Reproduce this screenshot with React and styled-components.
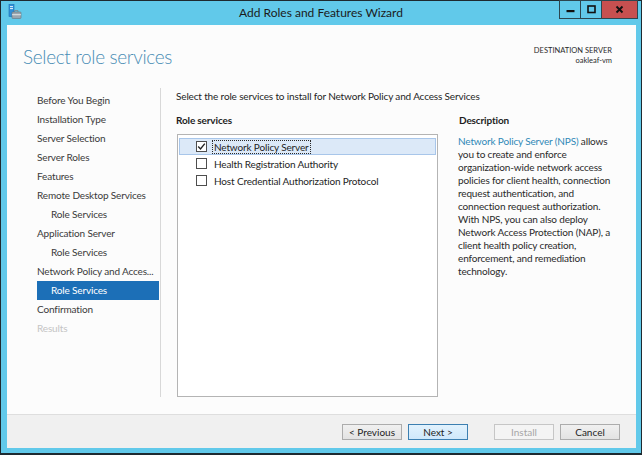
import styled, { createGlobalStyle } from "styled-components";

//////////////////////////////////////////////////////////////////////////////////////
// Constants
///////////////////////////////////////////////////

const frameCol = "#61c9ea";
const titleCol = "#4a8db5";
const linkCol = "#2f88b7";
const navSelCol = "#1c6fb7";
const uiFont = `Lato, "Noto Sans", "Liberation Sans", sans-serif`;

const navItems = [
	{ label: "Before You Begin" },
	{ label: "Installation Type" },
	{ label: "Server Selection" },
	{ label: "Server Roles" },
	{ label: "Features" },
	{ label: "Remote Desktop Services" },
	{ label: "Role Services", sub: true },
	{ label: "Application Server" },
	{ label: "Role Services", sub: true },
	{ label: "Network Policy and Acces..." },
	{ label: "Role Services", sub: true, active: true },
	{ label: "Confirmation" },
	{ label: "Results", disabled: true },
];

const services = [
	{ label: "Network Policy Server", checked: true, selected: true },
	{ label: "Health Registration Authority" },
	{ label: "Host Credential Authorization Protocol" },
];

//////////////////////////////////////////////////////////////////////////////////////
// Styles
///////////////////////////////////////////////////

const GlobalStyle = createGlobalStyle`
	html, body {
		margin: 0;
		padding: 0;
		background: #ffffff;
	}
	* {
		box-sizing: border-box;
	}
`;

const Window = styled.div`
	width: 642px;
	height: 455px;
	display: flex;
	flex-direction: column;
	background: ${frameCol};
	border: 1px solid #1e2a30;
	border-bottom-width: 2px;
	font-family: ${uiFont};
`;

const TitleBar = styled.div`
	height: 24px;
	flex: none;
	display: grid;
	grid-template-columns: 1fr auto 1fr;
	align-items: center;
`;

const AppIcon = styled.svg`
	margin-left: 7px;
	margin-top: -2px;
`;

const TitleText = styled.div`
	font-size: 12px;
	color: #1b1b1b;
	margin-top: -1px;
`;

const Controls = styled.div`
	justify-self: end;
	align-self: start;
	display: flex;
	margin-right: 3px;
	margin-top: -1px;
`;

const CtrlButton = styled.div`
	width: ${(p) => (p.$close ? 37 : 22)}px;
	height: 19px;
	display: flex;
	align-items: center;
	justify-content: center;
	border: 1px solid #2c4650;
	margin-left: -1px;
	background: ${(p) => (p.$close ? "#c75050" : frameCol)};
`;

const Client = styled.div`
	flex: 1;
	margin: 0 5px 5px 6px;
	display: flex;
	flex-direction: column;
	background: #fcfcfc;
	min-height: 0;
`;

const Header = styled.div`
	height: 63px;
	flex: none;
	display: flex;
	justify-content: space-between;
	align-items: flex-start;
	padding: 0 24px 0 16px;
`;

const PageTitle = styled.h1`
	margin: 20px 0 0;
	font-size: 19px;
	line-height: 24px;
	font-weight: 300;
	letter-spacing: -0.35px;
	color: ${titleCol};
`;

const Destination = styled.div`
	margin-top: 21px;
	text-align: right;
	font-size: 7.5px;
	line-height: 10px;
	color: #2a2a2a;
`;

const Body = styled.div`
	flex: 1;
	display: flex;
	padding-bottom: 17px;
	min-height: 0;
	font-size: 10px;
	letter-spacing: -0.15px;
`;

const Nav = styled.div`
	width: 154px;
	flex: none;
	padding: 3px 0 0 30px;
	border-right: 1px solid #d8d8d8;
`;

const NavItem = styled.div`
	height: 19px;
	line-height: 19px;
	margin-right: 1px;
	padding-left: ${(p) => (p.$sub ? 14 : 0)}px;
	white-space: nowrap;
	color: ${(p) => (p.$active ? "#ffffff" : p.$disabled ? "#c4c4c4" : "#3a3a3a")};
	background: ${(p) => (p.$active ? navSelCol : "transparent")};
`;

const Main = styled.div`
	flex: 1;
	display: flex;
	flex-direction: column;
	padding: 1px 16px 0 15px;
	min-width: 0;
`;

const Intro = styled.div`
	line-height: 14px;
	color: #1e1e1e;
	white-space: nowrap;
`;

const Columns = styled.div`
	flex: 1;
	display: grid;
	grid-template-columns: 262px 1fr;
	column-gap: 20px;
	margin-top: 10px;
	min-height: 0;
`;

const Column = styled.div`
	display: flex;
	flex-direction: column;
	min-height: 0;
`;

const ColHeading = styled.div`
	line-height: 14px;
	font-weight: 700;
	color: #1e1e1e;
	padding-left: ${(p) => (p.$inset ? 1 : 0)}px;
`;

const ListBox = styled.div`
	flex: 1;
	margin: 7px 0 0 1px;
	padding: 3px 1px;
	background: #ffffff;
	border: 1px solid #b4b4b4;
`;

const Row = styled.div`
	height: 17px;
	display: flex;
	align-items: center;
	padding-left: 16px;
	color: #1e1e1e;
	background: ${(p) => (p.$selected ? "#dce9f8" : "transparent")};
	border: 1px solid ${(p) => (p.$selected ? "#a8c6ea" : "transparent")};
`;

const Check = styled.div`
	width: 11px;
	height: 11px;
	flex: none;
	display: flex;
	align-items: center;
	justify-content: center;
	border: 1px solid #4e4e4e;
	background: #ffffff;
	margin-right: 6px;
`;

const RowLabel = styled.span`
	line-height: 12px;
	padding: 0 1px;
	outline: ${(p) => (p.$focus ? "1px dotted #2a2a2a" : "none")};
`;

const DescText = styled.div`
	margin-top: 8px;
	line-height: 13px;
	color: #2a2a2a;
	white-space: nowrap;
`;

const Link = styled.span`
	color: ${linkCol};
`;

const Footer = styled.div`
	height: 34px;
	flex: none;
	display: flex;
	justify-content: flex-end;
	align-items: center;
	gap: 6px;
	padding-right: 16px;
	background: #f0f0f0;
	border-top: 1px solid #dedede;
`;

const Button = styled.div`
	width: 60px;
	height: 16px;
	display: flex;
	align-items: center;
	justify-content: center;
	font-size: 10px;
	margin-left: ${(p) => (p.$spaced ? 20 : 0)}px;
	color: ${(p) => (p.$disabled ? "#a6a6a6" : "#1e1e1e")};
	border: 1px solid ${(p) => (p.$primary ? "#3c7fb1" : p.$disabled ? "#c6c6c6" : "#acacac")};
	background: ${(p) =>
		p.$primary
			? "linear-gradient(#e2f2fd, #cfe8fb)"
			: p.$disabled
			? "#f4f4f4"
			: "linear-gradient(#f0f0f0, #e3e3e3)"};
`;

//////////////////////////////////////////////////////////////////////////////////////
// Subcomponents
///////////////////////////////////////////////////

const WizardIcon = () => (
	<AppIcon width="14" height="16" viewBox="0 0 14 16">
		<rect x="1" y="0.5" width="5" height="12" fill="#2f8fd8" stroke="#1b6fb3" strokeWidth="0.6" />
		<rect x="2" y="2.2" width="3" height="0.9" fill="#ffffff" />
		<rect x="2" y="4.2" width="3" height="0.9" fill="#ffffff" />
		<path d="M6.5 8 v-1.4 h3.5 v1.4" fill="none" stroke="#7d8c97" strokeWidth="1" />
		<rect x="4" y="8" width="9" height="6.5" rx="0.8" fill="#9aa6b0" stroke="#65737e" strokeWidth="0.6" />
		<rect x="4" y="10.3" width="9" height="0.9" fill="#ffffff" opacity="0.8" />
	</AppIcon>
);

const WindowControls = () => (
	<Controls>
		<CtrlButton>
			<svg width="9" height="9" viewBox="0 0 9 9">
				<rect x="0.5" y="5" width="8" height="2.2" fill="#111" />
			</svg>
		</CtrlButton>
		<CtrlButton>
			<svg width="9" height="9" viewBox="0 0 9 9">
				<rect x="1" y="1" width="7" height="6.5" fill="none" stroke="#111" strokeWidth="1.6" />
			</svg>
		</CtrlButton>
		<CtrlButton $close>
			<svg width="9" height="9" viewBox="0 0 9 9">
				<path d="M1.5 1.5 L7.5 7.5 M7.5 1.5 L1.5 7.5" stroke="#111" strokeWidth="1.9" />
			</svg>
		</CtrlButton>
	</Controls>
);

const CheckMark = () => (
	<svg width="9" height="9" viewBox="0 0 9 9">
		<path d="M1.2 4.6 L3.5 6.9 L7.8 1.6" fill="none" stroke="#222" strokeWidth="1.4" />
	</svg>
);

//////////////////////////////////////////////////////////////////////////////////////
// App
///////////////////////////////////////////////////

const App = () => (
	<>
		<GlobalStyle />
		<Window>
			<TitleBar>
				<WizardIcon />
				<TitleText>Add Roles and Features Wizard</TitleText>
				<WindowControls />
			</TitleBar>
			<Client>
				<Header>
					<PageTitle>Select role services</PageTitle>
					<Destination>
						DESTINATION SERVER
						<br />
						oakleaf-vm
					</Destination>
				</Header>
				<Body>
					<Nav>
						{navItems.map((item, i) => (
							<NavItem key={i} $sub={item.sub} $active={item.active} $disabled={item.disabled}>
								{item.label}
							</NavItem>
						))}
					</Nav>
					<Main>
						<Intro>Select the role services to install for Network Policy and Access Services</Intro>
						<Columns>
							<Column>
								<ColHeading>Role services</ColHeading>
								<ListBox>
									{services.map((s) => (
										<Row key={s.label} $selected={s.selected}>
											<Check>{s.checked && <CheckMark />}</Check>
											<RowLabel $focus={s.selected}>{s.label}</RowLabel>
										</Row>
									))}
								</ListBox>
							</Column>
							<Column>
								<ColHeading $inset>Description</ColHeading>
								<DescText>
									<Link>Network Policy Server (NPS)</Link> allows
									<br />
									you to create and enforce
									<br />
									organization-wide network access
									<br />
									policies for client health, connection
									<br />
									request authentication, and
									<br />
									connection request authorization.
									<br />
									With NPS, you can also deploy
									<br />
									Network Access Protection (NAP), a
									<br />
									client health policy creation,
									<br />
									enforcement, and remediation
									<br />
									technology.
								</DescText>
							</Column>
						</Columns>
					</Main>
				</Body>
				<Footer>
					<Button>&lt; Previous</Button>
					<Button $primary>Next &gt;</Button>
					<Button $disabled $spaced>Install</Button>
					<Button>Cancel</Button>
				</Footer>
			</Client>
		</Window>
	</>
);

export default App;
